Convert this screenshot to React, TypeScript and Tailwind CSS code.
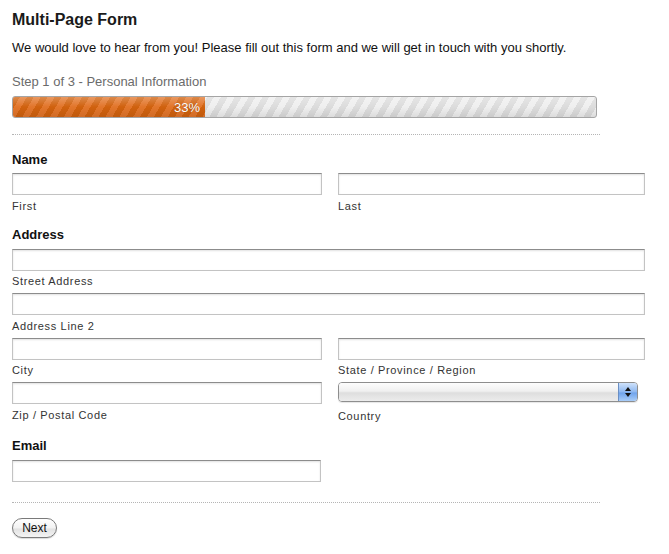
import React from 'react'

const inputCls =
  'block h-[22px] border border-[#c3c3c3] border-t-[#8c8c8c] bg-white shadow-[inset_0_1px_2px_rgba(0,0,0,0.12)]'

function TextField({ label, width, mt = 'mt-[3px]' }: { label: string; width: string; mt?: string }) {
  return (
    <div>
      <input type="text" className={`${inputCls} ${width}`} />
      <div className={`${mt} h-[14px] text-[11px] leading-[14px] tracking-[0.65px] text-[#333]`}>{label}</div>
    </div>
  )
}

function Heading({ children, className = '' }: { children: React.ReactNode; className?: string }) {
  return <div className={`h-[18px] text-[13px] leading-[18px] font-bold text-[#111] ${className}`}>{children}</div>
}

export default function App() {
  return (
    <div className="min-h-[554px] bg-white pl-[12px] pt-[10px] font-['Liberation_Sans',Arial,sans-serif]">
      <h1 className="h-[20px] text-[16px] leading-[20px] font-bold text-[#1a1a1a]">Multi-Page Form</h1>
      <p className="mt-[9px] h-[18px] text-[13px] leading-[18px] text-[#111]">
        We would love to hear from you! Please fill out this form and we will get in touch with you shortly.
      </p>

      {/* Progress */}
      <div className="mt-[16px] h-[18px] text-[13px] leading-[18px] text-[#6b6b6b]">Step 1 of 3 - Personal Information</div>
      <div className="relative mt-[5px] h-[22px] w-[585px] overflow-hidden rounded-[3px] border border-[#a5a5a5] bg-[repeating-linear-gradient(120deg,#dcdcdc_0px,#dcdcdc_6px,#efefef_6px,#efefef_12px)]">
        <div className="absolute inset-y-0 left-0 flex w-[192px] items-center justify-end bg-[repeating-linear-gradient(120deg,#d0610e_0px,#d0610e_6px,#e2752a_6px,#e2752a_12px)] pr-[5px]">
          <span className="relative z-10 text-[13px] leading-none text-white [text-shadow:0_0_1px_rgba(0,0,0,0.3)]">33%</span>
        </div>
        <div className="absolute inset-0 bg-[linear-gradient(to_bottom,rgba(255,255,255,0.25),rgba(255,255,255,0)_50%,rgba(0,0,0,0.08))]" />
      </div>

      <div className="mt-[16px] w-[588px] border-t border-dotted border-[#b5b5b5]" />

      {/* Name */}
      <Heading className="mt-[16px]">Name</Heading>
      <div className="mt-[4px] flex gap-[16px]">
        <TextField label="First" width="w-[310px]" mt="mt-[4px]" />
        <TextField label="Last" width="w-[307px]" mt="mt-[4px]" />
      </div>

      {/* Address */}
      <Heading className="mt-[13px]">Address</Heading>
      <div className="mt-[5px]">
        <TextField label="Street Address" width="w-[633px]" />
      </div>
      <div className="mt-[5px]">
        <TextField label="Address Line 2" width="w-[633px]" mt="mt-[4px]" />
      </div>
      <div className="mt-[5px] flex gap-[16px]">
        <TextField label="City" width="w-[310px]" />
        <TextField label="State / Province / Region" width="w-[307px]" />
      </div>
      <div className="mt-[5px] flex gap-[16px]">
        <TextField label="Zip / Postal Code" width="w-[310px]" mt="mt-[4px]" />
        <div>
          <div className="flex h-[20px] w-[300px] overflow-hidden rounded-[4px] border border-[#8e8e8e] shadow-[0_1px_1px_rgba(0,0,0,0.1)]">
            <div className="flex-1 bg-[linear-gradient(to_bottom,#fdfdfd,#f0f0f0_45%,#dedede_55%,#ececec)]" />
            <div className="flex w-[19px] flex-col items-center justify-center gap-[2px] border-l border-[#6a8fc4] bg-[linear-gradient(to_bottom,#cfe2fb,#8db7f0_50%,#6fa3ec_55%,#a9cdf8)]">
              <svg width="6" height="4" viewBox="0 0 6 4"><path d="M3 0L6 4H0z" fill="#111" /></svg>
              <svg width="6" height="4" viewBox="0 0 6 4"><path d="M0 0H6L3 4z" fill="#111" /></svg>
            </div>
          </div>
          <div className="mt-[7px] h-[14px] text-[11px] leading-[14px] tracking-[0.65px] text-[#333]">Country</div>
        </div>
      </div>

      {/* Email */}
      <Heading className="mt-[14px]">Email</Heading>
      <div className="mt-[5px]">
        <input type="text" className={`${inputCls} w-[309px]`} />
      </div>

      <div className="mt-[20px] w-[588px] border-t border-dotted border-[#b5b5b5]" />

      <button
        type="button"
        className="mt-[15px] h-[20px] w-[45px] rounded-full border border-[#7a7a7a] bg-[linear-gradient(to_bottom,#ffffff,#f2f2f2_50%,#e2e2e2_55%,#f4f4f4)] text-[12px] leading-[18px] text-[#111] shadow-[0_1px_1px_rgba(0,0,0,0.15)]"
      >
        Next
      </button>
    </div>
  )
}
